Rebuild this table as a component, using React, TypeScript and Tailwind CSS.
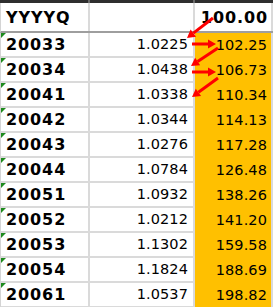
const rows: [string, string, string][] = [
  ['20033', '1.0225', '102.25'],
  ['20034', '1.0438', '106.73'],
  ['20041', '1.0338', '110.34'],
  ['20042', '1.0344', '114.13'],
  ['20043', '1.0276', '117.28'],
  ['20044', '1.0784', '126.48'],
  ['20051', '1.0932', '138.26'],
  ['20052', '1.0212', '141.20'],
  ['20053', '1.1302', '159.58'],
  ['20054', '1.1824', '188.69'],
  ['20061', '1.0537', '198.82'],
];

function Arrow({ x1, y1, x2, y2 }: { x1: number; y1: number; x2: number; y2: number }) {
  const a = Math.atan2(y2 - y1, x2 - x1);
  const len = 8;
  const w = 4.5;
  const bx = x2 - len * Math.cos(a);
  const by = y2 - len * Math.sin(a);
  const px = -Math.sin(a) * w;
  const py = Math.cos(a) * w;
  return (
    <g>
      <line x1={x1} y1={y1} x2={bx} y2={by} stroke="#ff0000" strokeWidth={3} />
      <polygon points={`${x2},${y2} ${bx + px},${by + py} ${bx - px},${by - py}`} fill="#ff0000" />
    </g>
  );
}

export default function App() {
  return (
    <div className="relative w-[273px] h-[307px] overflow-hidden bg-white font-['DejaVu_Sans',sans-serif] text-black">
      {/* top frame bar */}
      <div className="flex h-[3px] bg-[#2e2e2e]">
        <div className="w-[88px]" />
        <div className="w-[2px] bg-[#6a6a6a]" />
        <div className="w-[103px]" />
        <div className="w-[2px] bg-[#6a6a6a]" />
      </div>

      {/* header row */}
      <div className="flex h-[30px] border-b-2 border-[#9e9e9e] border-l border-l-[#d4d4d4]">
        <div className="w-[89px] border-r-2 border-[#dadada] flex items-center pl-[5px] pt-[1px] font-bold text-[16px] tracking-[0.9px]">
          YYYYQ
        </div>
        <div className="w-[105px] border-r-2 border-[#dadada]" />
        <div className="w-[78px] border-r-2 border-[#dadada] flex items-center justify-end pr-[3px] pt-[1px] font-bold text-[16px] tracking-[0.9px]">
          100.00
        </div>
      </div>

      {/* data rows */}
      {rows.map(([q, f, v]) => (
        <div key={q} className="flex h-[25px] border-l border-l-[#d4d4d4]">
          <div className="relative w-[89px] border-r-2 border-b-2 border-[#dadada] flex items-center pl-[5px] pt-[1px] font-bold text-[16px] tracking-[0.9px]">
            <span className="absolute left-0 top-0 w-0 h-0 border-t-[5px] border-r-[5px] border-t-[#1e8a1e] border-r-transparent" />
            {q}
          </div>
          <div className="w-[105px] border-r-2 border-b-2 border-[#dadada] flex items-center justify-end pr-[5px] pt-[1px] text-[14.5px] tracking-[0.1px]">
            {f}
          </div>
          <div className="w-[78px] border-r-2 border-r-[#dadada] bg-[#ffc000] flex items-center justify-end pr-[4px] pt-[1px] text-[14.5px] tracking-[0.1px]">
            {v}
          </div>
        </div>
      ))}

      {/* annotation arrows */}
      <svg className="absolute left-0 top-0 pointer-events-none" width={273} height={307}>
        <Arrow x1={213} y1={18} x2={187} y2={38} />
        <Arrow x1={192} y1={44} x2={216} y2={44} />
        <Arrow x1={218} y1={48} x2={191} y2={66} />
        <Arrow x1={192} y1={72} x2={216} y2={72} />
        <Arrow x1={218} y1={78} x2={192} y2={97} />
      </svg>
    </div>
  );
}
